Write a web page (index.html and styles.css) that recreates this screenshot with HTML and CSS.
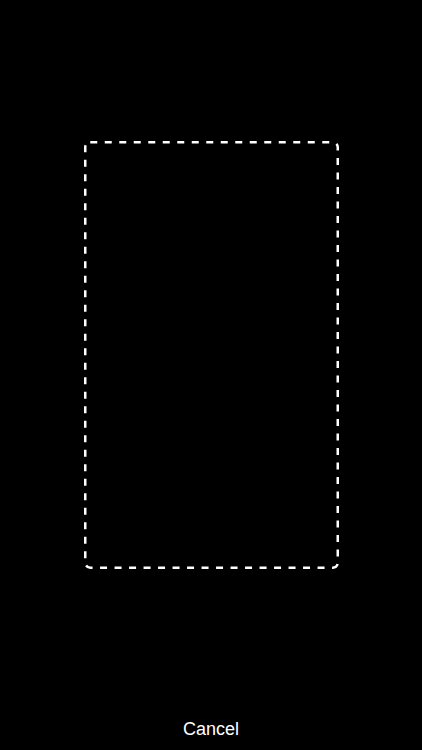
FILE: index.html
```html
<!DOCTYPE html>
<html>
<head>
<meta charset="utf-8">
<link rel="stylesheet" href="styles.css">
</head>
<body>
<main class="screen">
  <svg class="frame" width="255" height="428" viewBox="0 0 255 428">
    <rect x="1.25" y="1.25" width="252.5" height="425.5" rx="5" ry="5" fill="none" stroke="#fff" stroke-width="2.5" stroke-dasharray="7 7.5"/>
  </svg>
  <div class="cancel">Cancel</div>
</main>
</body>
</html>
```
FILE: styles.css
```css
html, body {
  margin: 0;
  padding: 0;
  background: #000;
}
.screen {
  width: 422px;
  height: 750px;
  box-sizing: border-box;
  padding-top: 141px;
  padding-bottom: 10px;
  display: flex;
  flex-direction: column;
  align-items: center;
}
.frame {
  display: block;
}
.cancel {
  margin-top: auto;
  font-family: "Liberation Sans", Arial, sans-serif;
  font-size: 18px;
  line-height: 22px;
  color: #fff;
}
```
